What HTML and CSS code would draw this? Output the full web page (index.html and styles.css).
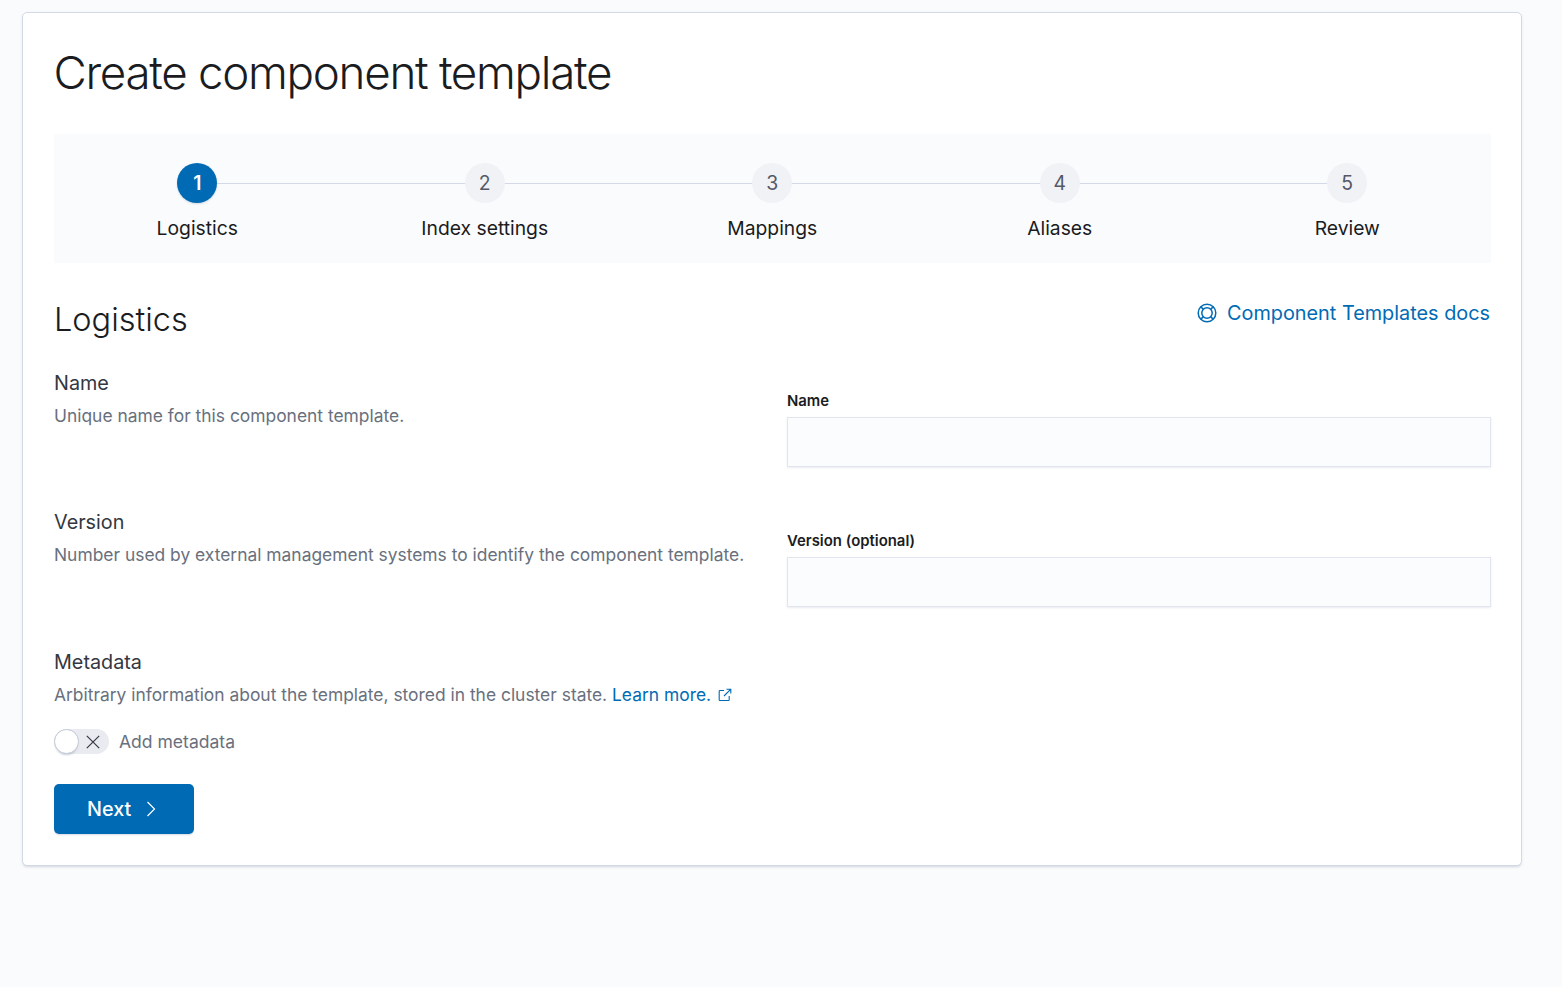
FILE: index.html
```html
<!DOCTYPE html>
<html lang="en">
<head>
    <meta charset="UTF-8">
    <meta name="viewport" content="width=device-width, initial-scale=1.0">
    <title>Create component template</title>
    <link rel="stylesheet" href="styles.css">
</head>
<body>
    <main class="panel">
        <h1 class="page-title">Create component template</h1>

        <ol class="steps">
            <li class="step step-current">
                <span class="step-number">1</span>
                <span class="step-label">Logistics</span>
            </li>
            <li class="step">
                <span class="step-number">2</span>
                <span class="step-label">Index settings</span>
            </li>
            <li class="step">
                <span class="step-number">3</span>
                <span class="step-label">Mappings</span>
            </li>
            <li class="step">
                <span class="step-number">4</span>
                <span class="step-label">Aliases</span>
            </li>
            <li class="step">
                <span class="step-number">5</span>
                <span class="step-label">Review</span>
            </li>
        </ol>

        <div class="section-head">
            <h2 class="section-title">Logistics</h2>
            <a class="docs-link" href="#">
                <svg class="docs-icon" width="20" height="20" viewBox="0 0 20 20" fill="none" stroke="#006bb4" stroke-width="1.5">
                    <circle cx="10" cy="10" r="8.8"/>
                    <circle cx="10" cy="10" r="5.2"/>
                    <path d="M3.8 3.8l2.6 2.6M16.2 3.8l-2.6 2.6M3.8 16.2l2.6-2.6M16.2 16.2l-2.6-2.6"/>
                </svg>
                Component Templates docs
            </a>
        </div>

        <div class="form-row form-row-name">
            <div class="form-text">
                <h3 class="field-title">Name</h3>
                <p class="field-desc">Unique name for this component template.</p>
            </div>
            <div class="form-field">
                <label class="field-label" for="name">Name</label>
                <input class="field-input" type="text" id="name">
            </div>
        </div>

        <div class="form-row form-row-version">
            <div class="form-text">
                <h3 class="field-title">Version</h3>
                <p class="field-desc">Number used by external management systems to identify the component template.</p>
            </div>
            <div class="form-field">
                <label class="field-label" for="version">Version (optional)</label>
                <input class="field-input" type="text" id="version">
            </div>
        </div>

        <div class="metadata">
            <h3 class="field-title">Metadata</h3>
            <p class="field-desc">Arbitrary information about the template, stored in the cluster state. <a class="learn-link" href="#">Learn more.<svg class="external-icon" width="14" height="14" viewBox="0 0 14 14" fill="none" stroke="#006bb4" stroke-width="1.1"><path d="M6 2.5H2a.8.8 0 0 0-.8.8v8.4a.8.8 0 0 0 .8.8h8.4a.8.8 0 0 0 .8-.8V8"/><path d="M8.5 1.2h4.3v4.3M12.6 1.4L6 8"/></svg></a></p>
            <div class="switch-row">
                <span class="switch">
                    <span class="switch-knob"></span>
                    <svg class="switch-x" width="14" height="14" viewBox="0 0 14 14" fill="none" stroke="#343741" stroke-width="1.2"><path d="M.8.8l12.4 12.4M13.2.8L.8 13.2"/></svg>
                </span>
                <span class="switch-label">Add metadata</span>
            </div>
        </div>

        <button class="next-button" type="button">
            Next
            <svg width="10" height="16" viewBox="0 0 10 16" fill="none" stroke="#fff" stroke-width="1.2"><path d="M1.5 1l7 7-7 7"/></svg>
        </button>
    </main>
</body>
</html>
```

FILE: styles.css
```css
/* Basic Reset */
* {
    margin: 0;
    padding: 0;
    box-sizing: border-box;
}
html, body {
    height: 100%;
}
body {
    font-family: Inter, "Liberation Sans", sans-serif;
    background-color: #fafbfd;
    color: #343741;
    padding: 12px 40px 0 22px;
}
a {
    color: #006bb4;
    text-decoration: none;
}
.panel {
    background: #fff;
    height: 854px;
    padding: 32px 30px 0 31px;
    border: 1px solid #d3dae6;
    border-radius: 5px;
    box-shadow: 0 2px 2px -1px rgba(152, 162, 179, 0.3), 0 1px 5px -2px rgba(152, 162, 179, 0.3);
}
.page-title {
    font-size: 45.7px;
    font-weight: 300;
    line-height: 56px;
    color: #1a1c21;
    letter-spacing: -1.29px;
    margin-left: -0.5px;
}

/* Steps */
.steps {
    display: flex;
    list-style: none;
    margin: 33px 0 0 -0.5px;
    height: 129px;
    padding-top: 29px;
    background-color: #fafbfd;
}
.step {
    flex: 1;
    display: flex;
    flex-direction: column;
    align-items: center;
    position: relative;
}
.step:not(:last-child)::after {
    content: "";
    position: absolute;
    top: 20px;
    left: 50%;
    width: 100%;
    height: 1px;
    background-color: #d3dae6;
}
.step-number {
    position: relative;
    z-index: 1;
    width: 40px;
    height: 40px;
    line-height: 40px;
    text-align: center;
    border-radius: 50%;
    font-size: 19.4px;
    font-weight: 400;
    color: #535966;
    background-color: #f1f2f6;
}
.step-current .step-number {
    background-color: #006bb4;
    color: #fff;
    font-weight: 600;
    box-shadow: 0 1px 2px rgba(152, 162, 179, 0.4);
}
.step-label {
    margin-top: 12px;
    font-size: 19.3px;
    line-height: 27px;
    color: #1a1c21;
}

/* Section heading */
.section-head {
    display: flex;
    justify-content: space-between;
    align-items: flex-start;
    margin-top: 32px;
}
.section-title {
    font-size: 32.5px;
    font-weight: 300;
    line-height: 50px;
    color: #1a1c21;
}
.docs-link {
    display: flex;
    align-items: center;
    gap: 10px;
    margin-right: 1px;
    font-size: 19.85px;
    line-height: 37px;
}
.docs-icon {
    display: block;
    margin-top: -1px;
}

/* Form rows */
.form-row {
    display: flex;
}
.form-row-name {
    margin-top: 25px;
    height: 139px;
}
.form-row-version {
    height: 140px;
}
.form-row-version .form-field {
    padding-top: 23px;
}
.form-text {
    width: 733px;
    flex: none;
}
.form-field {
    flex: 1;
    padding-top: 22px;
}
.field-title {
    font-size: 19.8px;
    font-weight: 400;
    line-height: 27px;
    color: #343741;
}
.field-desc {
    margin-top: 5px;
    font-size: 17.42px;
    line-height: 27px;
    color: #69707d;
}
.field-label {
    display: block;
    font-size: 14.9px;
    font-weight: 600;
    line-height: 18px;
    color: #1a1c21;
    margin-bottom: 7px;
}
.field-input {
    display: block;
    width: 100%;
    height: 50px;
    background-color: #fbfcfd;
    border: 1px solid #e3e5ee;
    box-shadow: 0 1px 2px rgba(152, 162, 179, 0.2);
}

/* Metadata */
.external-icon {
    margin-left: 7px;
    vertical-align: -1px;
}
.switch-row {
    display: flex;
    align-items: center;
    gap: 10px;
    margin-top: 20px;
}
.switch {
    position: relative;
    display: block;
    width: 55px;
    height: 25px;
    border-radius: 13px;
    background-color: #e9ebf0;
}
.switch-knob {
    position: absolute;
    top: 0;
    left: 0;
    width: 25px;
    height: 25px;
    border-radius: 50%;
    background-color: #fff;
    border: 1px solid #c2c9d6;
    box-shadow: 0 2px 2px -1px rgba(152, 162, 179, 0.5);
}
.switch-x {
    position: absolute;
    top: 6px;
    left: 31.5px;
}
.switch-label {
    font-size: 17.55px;
    line-height: 27px;
    color: #69707d;
}
.next-button {
    display: flex;
    align-items: center;
    gap: 15px;
    width: 140px;
    height: 50px;
    margin-top: 29px;
    padding-left: 33px;
    font-family: inherit;
    font-size: 19.8px;
    font-weight: 500;
    color: #fff;
    background-color: #006bb4;
    border: none;
    border-radius: 5px;
    box-shadow: 0 2px 2px -1px rgba(152, 162, 179, 0.4);
}
```
